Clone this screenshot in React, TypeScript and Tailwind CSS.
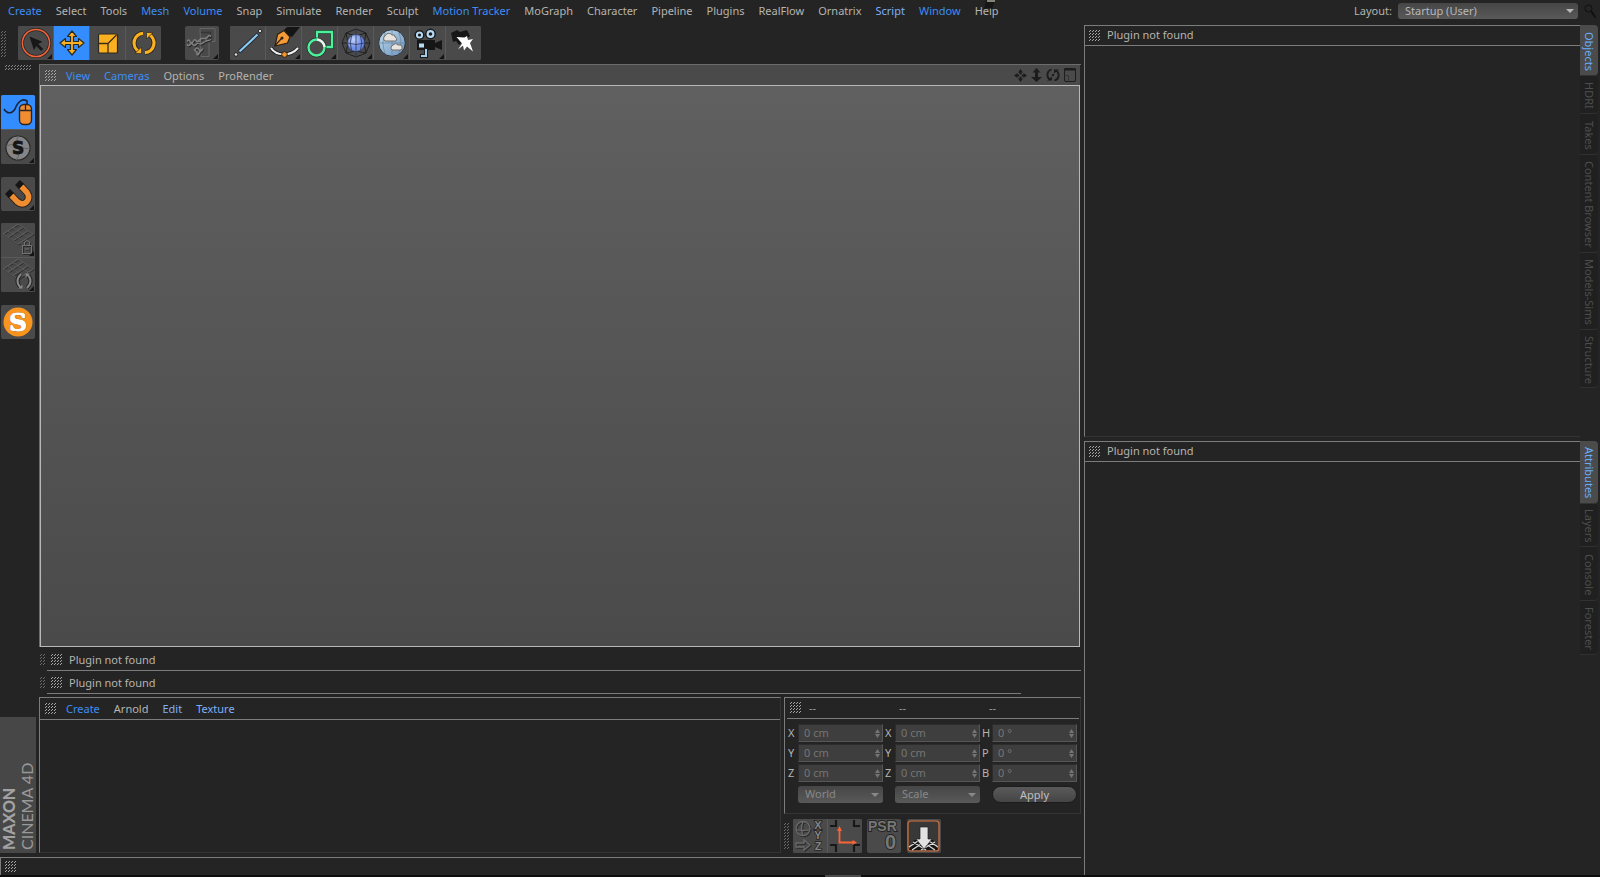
import React, { useId } from "react";

type Tone = "blue" | "light" | "plain";
type Item = { label: string; tone?: Tone };

const toneClass: Record<Tone, string> = {
  blue: "text-[#3c8ef5]",
  light: "text-[#7db0fa]",
  plain: "text-[#b4b4b0]",
};

const mainMenu: Item[] = [
  { label: "Create", tone: "blue" },
  { label: "Select" },
  { label: "Tools" },
  { label: "Mesh", tone: "blue" },
  { label: "Volume", tone: "blue" },
  { label: "Snap" },
  { label: "Simulate" },
  { label: "Render" },
  { label: "Sculpt" },
  { label: "Motion Tracker", tone: "blue" },
  { label: "MoGraph" },
  { label: "Character" },
  { label: "Pipeline" },
  { label: "Plugins" },
  { label: "RealFlow" },
  { label: "Ornatrix" },
  { label: "Script", tone: "light" },
  { label: "Window", tone: "blue" },
  { label: "Help" },
];

function MenuItems({ items }: { items: Item[] }) {
  return (
    <>
      {items.map((i) => (
        <button key={i.label} type="button" className={`whitespace-nowrap ${toneClass[i.tone ?? "plain"]}`}>
          {i.label}
        </button>
      ))}
    </>
  );
}

function Grip({ cols = 4, rows = 4, color = "#a8a8a8" }: { cols?: number; rows?: number; color?: string }) {
  const id = useId();
  return (
    <svg width={cols * 3} height={rows * 3} className="shrink-0" shapeRendering="crispEdges" aria-hidden="true">
      <defs>
        <pattern id={id} width="3" height="3" patternUnits="userSpaceOnUse">
          <path d="M1 0h1v1h-1zM0 1h1v1h-1z" fill={color} />
        </pattern>
      </defs>
      <rect width="100%" height="100%" fill={`url(#${id})`} />
    </svg>
  );
}

function Tool({
  label,
  children,
  active,
  more,
  className = "",
}: {
  label: string;
  children: React.ReactNode;
  active?: boolean;
  more?: boolean;
  className?: string;
}) {
  return (
    <button type="button" aria-label={label} className={`shrink-0 ${active ? "bg-[#348dff]" : "bg-[#4a4a4a]"} ${className}`}>
      <svg viewBox="0 0 34 34" className="mx-auto block size-[34px]" fill="none">
        {children}
        {more && <path d="M33 28v5h-5z" fill="#141414" />}
      </svg>
    </button>
  );
}

/* Disabled icons are pressed into the button: a light edge under a dark one. */
function Emboss({ d, width = 1.2, light = "#777" }: { d: string; width?: number; light?: string }) {
  return (
    <>
      <path d={d} transform="translate(1 1)" stroke="#2a2a2a" strokeWidth={width} />
      <path d={d} stroke={light} strokeWidth={width} />
    </>
  );
}

const CursorIcon = (
  <>
    <circle cx="17" cy="17" r="13.6" stroke="#2c2020" strokeWidth="3" />
    <circle cx="17" cy="17" r="13.6" stroke="#f0653a" strokeWidth="1.5" />
    <path d="M10.500 10.500l13 5.200-4.300 2.300 5 5-2 2-5-5-2.200 4.300z" fill="#171717" />
  </>
);
const MoveIcon = (
  <path
    d="M17 5l4.500 5.500h-3v5h5v-3l5.500 4.500-5.500 4.500v-3h-5v5h3L17 29l-4.500-5.500h3v-5h-5v3L5 17l5.500-4.500v3h5v-5h-3z"
    fill="#fbb01f"
    stroke="#2b2a22"
    strokeWidth="1.200"
    strokeLinejoin="round"
  />
);
const ScaleIcon = (
  <>
    <rect x="7.500" y="8" width="19" height="19" rx="1" fill="#fbb01f" stroke="#2d2920" strokeWidth="1.200" />
    <path d="M7.500 17.500h9.500v9.500M17 17.500l8.500-8.500" stroke="#3a2d14" strokeWidth="1.300" />
  </>
);
const RotateIcon = (
  <>
    <path d="M12.500 25.700A9.700 9.700 0 0 1 16 7.300M21.500 8.300A9.700 9.700 0 0 1 18 26.700" stroke="#2b2820" strokeWidth="5" />
    <path d="M12.500 25.700A9.700 9.700 0 0 1 16 7.300M21.500 8.300A9.700 9.700 0 0 1 18 26.700" stroke="#fbb01f" strokeWidth="3.200" />
    <path d="M8 27.500h6.500v-6.500zM26 6.500h-6.500v6.500z" fill="#fbb01f" stroke="#2b2820" strokeWidth=".7" />
  </>
);
const CoordIcon = (
  <>
    <path d="M15 2.500h15v13h-6v15h-8z" fill="#494949" stroke="#666" />
    <path d="M16 6.500h9.500v9" stroke="#353535" strokeWidth="1.500" />
    <Emboss light="#828282" width={1.300} d="M2 15.500q1.500-3 3 0t3 0 3-1 3 0 3-2 3 0 3-2 3 0M2 18.500q1.500 2 3 0t3 0 3 0 3-1 3 0 3-2 3-1 3-1M10 23.500q2-3 4 0t4-1M11 27.500q2 3 3 0t3-3M9 23.500l5 5" />
    <g fill="#767676">
      <circle cx="15" cy="15" r="1.200" />
      <circle cx="21" cy="12.500" r="1.200" />
      <circle cx="15" cy="24" r="1.200" />
    </g>
  </>
);
const LineIcon = (
  <>
    <path d="M8 26L27 8" stroke="#292929" strokeWidth="4" />
    <path d="M8.500 25.500L26.500 8.500" stroke="#86cbfa" strokeWidth="2.200" />
    <circle cx="5" cy="28.500" r="1.800" fill="#ddd" stroke="#222" />
    <circle cx="29" cy="5" r="1.800" fill="#ddd" stroke="#222" />
  </>
);
const PenIcon = (
  <>
    <path d="M15 6l5-5h13l-8 10z" fill="#151515" />
    <path d="M8 20l2.500-11.500 6.500-4 6 6.500-2.500 6z" fill="#f59a35" stroke="#2c2116" strokeWidth="1.200" />
    <path d="M8 19.500l6.500-7" stroke="#2c2116" strokeWidth="1.200" />
    <circle cx="15" cy="12" r="1.500" fill="#2c2116" />
    <path d="M4 22c5 8 19 9 27 0" stroke="#202020" strokeWidth="4" />
    <path d="M4 22c5 8 19 9 27 0" stroke="#eee" strokeWidth="2" />
    <circle cx="17.500" cy="28.500" r="2.800" fill="#f79420" stroke="#242424" />
  </>
);
const SplineIcon = (
  <>
    <path d="M14 14V6h15v15h-8" stroke="#203a2d" strokeWidth="4" />
    <path d="M14 14V6h15v15h-8" stroke="#4bf29b" strokeWidth="2.300" />
    <circle cx="13.500" cy="21.500" r="8" stroke="#25332c" strokeWidth="4" />
    <circle cx="13.500" cy="21.500" r="8" fill="#4a4a4a" stroke="#4bf29b" strokeWidth="2.300" />
    <path d="M14 13.500a8 8 0 0 1 7.500 7.500" stroke="#f1f1f1" strokeWidth="2.300" />
  </>
);
const SphereIcon = (
  <>
    <defs>
      <radialGradient id="sphere" cx=".35" cy=".3"><stop stopColor="#c0d2ff" /><stop offset="1" stopColor="#6f8de4" /></radialGradient>
    </defs>
    <path d="M17 3l10 4 4 10-4 10-10 4-10-4-4-10 4-10zM7 7l10 3 10-3M7 27l10-2 10 2M7 7l2 10-2 10M27 7l-2 10 2 10M3 17h5M31 17h-5" stroke="#202020" strokeWidth="1" />
    <circle cx="17" cy="17" r="8.500" fill="url(#sphere)" stroke="#33426e" strokeWidth=".8" />
    <path d="M17 3v28M8.500 17q8.500 3 17 0M12.500 10q-2.500 7 0 14M21.500 10q2.500 7 0 14" stroke="#2c3658" strokeWidth=".8" />
  </>
);
const SkyIcon = (
  <>
    <defs>
      <linearGradient id="sky" x2="1" y2="1"><stop stopColor="#c1dcf1" /><stop offset="1" stopColor="#6a92ba" /></linearGradient>
    </defs>
    <circle cx="17" cy="17" r="13.300" fill="url(#sky)" stroke="#2e3338" />
    <path d="M17 4v26M4 17h26M10 7q-4 10 0 20M24 7q4 10 0 20" stroke="#66859f" strokeWidth=".7" />
    <path d="M10 15a3 3 0 0 1 0-5 4 4 0 0 1 7-1q3-1 3 2 3 1 1 4zM17 24a3 3 0 0 1 1-5q3-3 5 0 4-1 4 2 1 3-2 3z" fill="#e7e4e0" stroke="#66635f" strokeWidth=".9" />
  </>
);
const CameraIcon = (
  <>
    <path d="M6 14h18v3l7-3v10l-7-3v3H6z" fill="#161616" />
    <circle cx="8.500" cy="9" r="4.300" fill="#b5daf6" stroke="#1b1b1b" strokeWidth="1.500" />
    <circle cx="19.500" cy="8" r="4.700" fill="#b5daf6" stroke="#1b1b1b" strokeWidth="1.500" />
    <circle cx="8.500" cy="9" r="1.600" fill="#1b1b1b" />
    <circle cx="19.500" cy="8" r="1.800" fill="#1b1b1b" />
    <path d="M15 22v8H9" stroke="#1b1b1b" strokeWidth="4" />
    <path d="M15 23v7h-5" stroke="#a5cce8" strokeWidth="2" />
    <rect x="8" y="17.500" width="5" height="4" fill="#b5daf6" />
  </>
);
const LightIcon = (
  <>
    <path d="M4 7l6-3 3 2 7-2 3 6-11 9-3-4-3 1z" fill="#171717" />
    <path d="M9.500 11l8 0.500 2.500-1.500 1 4 5-1-3 4 3 8.500-6-5-3 4-1-5-5 4 4-6z" fill="#fff" />
  </>
);
const MouseIcon = (
  <>
    <path d="M3 14c3 5 8 5 11 0 3-8 8-11 12-8v4" stroke="#16263d" strokeWidth="1.600" />
    <rect x="18.500" y="9.500" width="12" height="20" rx="4.500" fill="#f08d30" stroke="#2b2420" strokeWidth="1.400" />
    <path d="M18.500 15.500h12M24.500 9.500v6" stroke="#2b2420" strokeWidth="1.300" />
  </>
);
const SnapIcon = (
  <>
    <circle cx="17" cy="18" r="12" fill="#858585" stroke="#282828" strokeWidth="1.200" />
    <path d="M5 16q5-3 12 0t12 3M17 6q-3 6 0 12t-2 12" stroke="#646464" />
    <text x="17" y="24" textAnchor="middle" fontFamily="'DejaVu Sans', sans-serif" fontWeight="700" fontSize="17" fill="#151515" stroke="#151515" strokeWidth=".8">S</text>
  </>
);
const MagnetIcon = (
  <>
    <path d="M9 17l7 7.500q5.500 4.500 9.500.500t.500-9.500l-7-7.500" stroke="#2b2119" strokeWidth="7.500" />
    <path d="M9 17l7 7.500q5.500 4.500 9.500.500t.500-9.500l-7-7.500" stroke="#f08d30" strokeWidth="5.500" />
    <path d="M10.500 18.500l-4-4M20.500 9.500l-4-4" stroke="#151515" strokeWidth="7" />
  </>
);
const floor = "M2 11l15-10 15 10-15 10zM7 8l15 10M12 4.500l15 10M7 14l15-10M12 17.500l15-10";
const GridLockIcon = (
  <>
    <Emboss d={floor} width={0.8} light="#636363" />
    <rect x="20" y="19" width="13" height="13" fill="#4a4a4a" />
    <Emboss d="M21.500 22.500h9v8h-9zM23.500 22v-3q2.500-3 5 0v3M24 26h4" width={1} light="#727272" />
  </>
);
const GridRotateIcon = (
  <>
    <Emboss d={floor} width={0.8} light="#636363" />
    <path d="M20 16q-7 7 0 14M26 16q7 7 0 14" stroke="#262626" strokeWidth="4" />
    <path d="M20 16q-7 7 0 14M26 16q7 7 0 14" stroke="#858585" strokeWidth="2" />
    <path d="M17 30.500h4.500v-4zM29 15.500h-4.500v4z" fill="#858585" />
  </>
);
const OrangeSIcon = (
  <>
    <circle cx="17" cy="17" r="14.500" fill="#f9941e" />
    <text x="17" y="26" textAnchor="middle" fontFamily="'DejaVu Serif', serif" fontWeight="700" fontSize="25" fill="#fff" stroke="#6a3410" strokeWidth="1" paintOrder="stroke">S</text>
    <text x="17" y="26" textAnchor="middle" aria-hidden="true" fontFamily="'DejaVu Serif', serif" fontWeight="700" fontSize="25" fill="#fff" stroke="#fff" strokeWidth=".8">S</text>
  </>
);
const XyzIcon = (
  <>
    <Emboss width={1.300} light="#696969" d="M17 9.500a7 7 0 1 1-14 0a7 7 0 1 1 14 0M3 10.500q7 2 14 0M10 2.500q-3 7 0 14M3 24h8v-3l6 5-6 5v-3H3z" />
    <g fontFamily="'Liberation Sans', sans-serif" fontWeight="700" fontSize="11" fill="#858585" stroke="#222" strokeWidth="1.500" paintOrder="stroke" textAnchor="middle">
      <text>
        <tspan x="25" y="10">X</tspan>
        <tspan x="25" y="20">Y</tspan>
        <tspan x="25" y="31">Z</tspan>
      </text>
    </g>
  </>
);
const AxisIcon = (
  <>
    <path d="M2 7h6V1M26 1v6h6M2 26h6v7M32 26h-6v7" stroke="#181818" strokeWidth="2.200" />
    <path d="M11.500 10v13.500H26" stroke="#fa6435" strokeWidth="1.800" />
    <path d="M11.500 7l2.500 5H9zM29 23.500l-4.500 2.500v-5z" fill="#fa6435" />
  </>
);
const PsrIcon = (
  <g fontFamily="'Liberation Sans', sans-serif" fontWeight="700" stroke="#242424" strokeWidth="1.800" paintOrder="stroke">
    <text x="1" y="12" fontSize="14" fill="#777">PSR</text>
    <text x="18" y="30" fontSize="20" fill="#777">0</text>
  </g>
);
const DropIcon = (
  <>
    <rect x="1" y="2" width="31" height="30" rx="3" fill="#383838" stroke="#d9723c" strokeWidth="1.200" />
    <path d="M7 21h19l5 10H2z" fill="#161616" />
    <path d="M2 28l9-6M5 31l12-8M14 31l14-8M31 28l-9-6M28 31l-12-8M19 31L6 23" stroke="#ddd" strokeWidth="1.200" />
    <path d="M13 8h8v12h4l-8 10-8-10h4z" fill="#e2e2e2" stroke="#222" strokeWidth=".7" />
  </>
);

function PluginHeader() {
  return (
    <div className="flex h-5 items-center gap-[6px] border-b border-[#7c7c7c] pl-1">
      <Grip />
      <span className="pb-px">Plugin not found</span>
    </div>
  );
}

function Tabs({ tabs }: { tabs: { label: string; size: string }[] }) {
  return (
    <div role="tablist" className="w-[18px] shrink-0">
      {tabs.map((t, i) => (
        <button
          key={t.label}
          type="button"
          role="tab"
          aria-selected={i === 0}
          className={`flex w-full items-center justify-center rounded-r-sm border-b pt-[2px] [writing-mode:vertical-rl] ${t.size} ${
            i === 0 ? "border-[#333] bg-[#4b4b4b] text-[#69adff]" : "border-[#303030] bg-[#202020] text-[#4e4e4e]"
          }`}
        >
          {t.label}
        </button>
      ))}
    </div>
  );
}

function Field({ label, value, group }: { label: string; value: string; group: string }) {
  const id = `${group}-${label}`;
  return (
    <div className="flex items-center">
      <label htmlFor={id} className="w-[10px] shrink-0">
        {label}
      </label>
      <div className="flex h-[18px] min-w-0 flex-1 items-center border border-t-[#2c2c2c] border-r-[#565656] border-b-[#565656] border-l-[#2c2c2c] bg-[#3e3e3e] pr-0.5 pl-[5px]">
        <input id={id} defaultValue={value} disabled className="w-full min-w-0 bg-transparent text-[#757575] outline-none" />
        <svg width="5" height="9" className="shrink-0" aria-hidden="true">
          <path d="M2.500 0L5 4H0zM2.500 9L5 5H0z" fill="#747474" />
        </svg>
      </div>
    </div>
  );
}

function Dropdown({ value, id, label, className, textClass }: { value: string; id: string; label: string; className: string; textClass: string }) {
  return (
    <div className={`relative rounded-[3px] bg-linear-to-b from-[#464646] to-[#595959] ${className}`}>
      <select id={id} aria-label={label} className={`block h-full w-full appearance-none pr-4 pb-px pl-[7px] outline-none ${textClass}`}>
        <option>{value}</option>
      </select>
      <svg width="8" height="5" className="pointer-events-none absolute top-1/2 right-1 -mt-0.5" aria-hidden="true">
        <path d="M0 0h8L4 4z" fill="currentColor" />
      </svg>
    </div>
  );
}

const coordGroups = [
  { name: "position", rows: [["X", "0 cm"], ["Y", "0 cm"], ["Z", "0 cm"]] },
  { name: "size", rows: [["X", "0 cm"], ["Y", "0 cm"], ["Z", "0 cm"]] },
  { name: "rotation", rows: [["H", "0 °"], ["P", "0 °"], ["B", "0 °"]] },
];

function Coordinates() {
  return (
    <section className="flex h-[117px] flex-col border border-[#343434] border-t-[#7c7c7c] border-l-[#7c7c7c] pr-px pl-0.5">
      <div className="flex h-[21px] shrink-0 items-center border-b border-[#7c7c7c] pl-[3px] text-[#999]">
        <Grip />
        <div className="grid flex-1 grid-cols-3 pl-[7px]">
          <span>--</span>
          <span>--</span>
          <span>--</span>
        </div>
      </div>
      <div className="grid grid-cols-3 gap-x-[2px] pt-[5px] pr-0.5 pl-px">
        {coordGroups.map((g) => (
          <div key={g.name} className="flex flex-col gap-0.5">
            {g.rows.map(([l, v]) => (
              <Field key={l} label={l} value={v} group={g.name} />
            ))}
            <div className="mt-0.5 pl-[10px]">
              {g.name === "position" && <Dropdown id="space" label="Coordinate space" value="World" className="h-[17px] text-[#888]" textClass="text-[#888]" />}
              {g.name === "size" && <Dropdown id="mode" label="Size mode" value="Scale" className="h-[17px] text-[#888]" textClass="text-[#888]" />}
              {g.name === "rotation" && (
                <button type="button" className="block h-[17px] w-full rounded-full border border-[#1c1c1c] bg-linear-to-b from-[#5a5a5a] to-[#454545] text-[#c0c0c0]">
                  Apply
                </button>
              )}
            </div>
          </div>
        ))}
      </div>
    </section>
  );
}

export default function App() {
  return (
    <div className="flex h-screen min-h-[640px] flex-col overflow-hidden bg-[#242424] font-['Noto_Sans',sans-serif] text-[11px] leading-4 text-[#b4b4b0]">
      <header className="relative flex h-[25px] shrink-0 items-center justify-between pr-1 pb-1 pl-2">
        <nav className="flex gap-[14px]">
          <MenuItems items={mainMenu} />
        </nav>
        <svg width="14" height="12" className="absolute top-0 left-[983px]" aria-hidden="true">
          <path d="M3 0h9L9 9l-4-1-4 1z" fill="#161616" />
          <path d="M4 1h8" stroke="#aaa89c" strokeWidth="1.500" />
        </svg>
        <div className="flex items-center gap-[6px]">
          <label htmlFor="layout">Layout:</label>
          <Dropdown id="layout" label="Layout" value="Startup (User)" className="h-4 w-[180px] text-[#b8b8b8]" textClass="text-[#b8b8b8]" />
          <button type="button" aria-label="Search">
            <svg width="12" height="14" fill="none" stroke="#111">
              <circle cx="4.500" cy="4.500" r="3.500" />
              <path d="M7 7l5 7" strokeWidth="2" />
            </svg>
          </button>
        </div>
      </header>

      <div className="flex min-h-0 flex-1">
        <div className="flex min-w-0 flex-1 flex-col pr-[3px]">
          <div className="flex h-[39px] shrink-0 items-start pt-px">
            <div className="mt-[5px] w-[18px] pl-px">
              <Grip cols={2} rows={9} color="#6c6c6c" />
            </div>
            <div className="flex gap-px overflow-hidden rounded-xs bg-[#5a5a5a]">
              <Tool label="Live selection" more className="w-[35px]">{CursorIcon}</Tool>
              <Tool label="Move" active className="w-[35px]">{MoveIcon}</Tool>
              <Tool label="Scale" className="w-[35px]">{ScaleIcon}</Tool>
              <Tool label="Rotate" className="w-[35px]">{RotateIcon}</Tool>
            </div>
            <div className="ml-6 overflow-hidden rounded-xs">
              <Tool label="Coordinate system" more className="block">{CoordIcon}</Tool>
            </div>
            <div className="ml-[11px] flex gap-px overflow-hidden rounded-xs bg-[#5a5a5a]">
              <Tool label="Line" className="w-[35px]">{LineIcon}</Tool>
              <Tool label="Pen" more className="w-[35px]">{PenIcon}</Tool>
              <Tool label="Spline" more className="w-[35px]">{SplineIcon}</Tool>
              <Tool label="Generator" more className="w-[35px]">{SphereIcon}</Tool>
              <Tool label="Sky" more className="w-[35px]">{SkyIcon}</Tool>
              <Tool label="Camera" more className="w-[35px]">{CameraIcon}</Tool>
              <Tool label="Light" className="w-[35px]">{LightIcon}</Tool>
            </div>
          </div>

          <div className="flex min-h-0 flex-1">
            <aside className="flex w-[39px] shrink-0 flex-col items-start">
              <div className="flex h-[31px] shrink-0 items-start pt-px pl-[5px]">
                <Grip cols={9} rows={2} color="#8a8a8a" />
              </div>
              <div className="ml-px flex flex-col gap-px overflow-hidden rounded-xs bg-[#5a5a5a]">
                <Tool label="Tweak mode" active>{MouseIcon}</Tool>
                <Tool label="Viewport solo" more>{SnapIcon}</Tool>
              </div>
              <div className="mt-[13px] ml-px flex overflow-hidden rounded-xs">
                <Tool label="Enable snap" more>{MagnetIcon}</Tool>
              </div>
              <div className="mt-[12px] ml-px flex flex-col gap-px overflow-hidden rounded-xs bg-[#5a5a5a]">
                <Tool label="Lock workplane" more>{GridLockIcon}</Tool>
                <Tool label="Rotate workplane" more>{GridRotateIcon}</Tool>
              </div>
              <div className="mt-[13px] ml-px flex overflow-hidden rounded-xs">
                <Tool label="Sculpt layers">{OrangeSIcon}</Tool>
              </div>
              <div className="mt-auto mb-1 flex h-[136px] w-9 rotate-180 flex-col items-start justify-start bg-[#474747] pt-[3px] font-['Lato',sans-serif] text-base leading-[18px] text-[#999] [writing-mode:vertical-rl]">
                <span className="font-black text-[#a2a2a2]">MAXON</span>
                <span>CINEMA 4D</span>
              </div>
            </aside>

            <div className="flex min-w-0 flex-1 flex-col">
              <section className="flex min-h-0 flex-1 flex-col border-t border-l border-[#6c6c6c] pr-px">
                <div className="flex h-5 shrink-0 items-center justify-between bg-[#4a4a4a] pr-[3px] pl-[5px]">
                  <div className="flex items-center gap-[14px] pt-px">
                    <div className="flex items-center gap-[9px]">
                      <Grip />
                      <button type="button" className="text-[#3c8ef5]">View</button>
                    </div>
                    <MenuItems items={[{ label: "Cameras", tone: "blue" }, { label: "Options" }, { label: "ProRender" }]} />
                  </div>
                  <div className="flex items-center gap-[3px]">
                    <button type="button" aria-label="Pan view">
                      <svg width="13" height="13" fill="#1c1c1c"><path d="M6.500 0L9 3.500H7.500v2h-2v-2H4zM6.500 13L9 9.500H7.500v-2h-2v2H4zM0 6.500L3.500 4v1.500h1.500v2H3.500V9zM13 6.500L9.500 4v1.500H8v2h1.500V9z" /></svg>
                    </button>
                    <button type="button" aria-label="Zoom view">
                      <svg width="13" height="14" fill="#1c1c1c"><path d="M6.500 0l4 4.500H8V9h4l-5.500 5L1 9h4V4.500H2.500z" /></svg>
                    </button>
                    <button type="button" aria-label="Orbit view">
                      <svg width="14" height="14" fill="none" stroke="#1c1c1c" strokeWidth="1.800"><path d="M4 11.500A5.500 5.500 0 0 1 5.500 1.500M10 2.500A5.500 5.500 0 0 1 8.500 12.500" /><path d="M1 12.500h5V8.500zM13 1.500H8v4z" fill="#1c1c1c" stroke="none" /><circle cx="7" cy="7" r="1.200" fill="#1c1c1c" stroke="none" /></svg>
                    </button>
                    <button type="button" aria-label="Toggle view">
                      <svg width="14" height="14" fill="none" stroke="#1c1c1c"><rect x="1.500" y=".5" width="11" height="13" rx="1.500" /><path d="M1 1.500h12" strokeWidth="2" /><path d="M1.500 7.500h4v6" stroke="#333" /></svg>
                    </button>
                  </div>
                </div>
                <div className="min-h-0 flex-1 border border-[#b8b8b8] bg-linear-to-b from-[#606060] to-[#4a4a4a]" />
              </section>

              <div className="flex shrink-0 flex-col pt-px">
                {["mr-0", "mr-[60px]"].map((m) => (
                  <div key={m} className="flex h-[23px] items-center gap-px pl-px">
                    <Grip cols={2} color="#6c6c6c" />
                    <div className={`flex h-full flex-1 items-center gap-[6px] border-b border-[#7c7c7c] pt-px pl-1 ${m}`}>
                      <Grip />
                      <span>Plugin not found</span>
                    </div>
                  </div>
                ))}
              </div>

              <div className="mt-[3px] flex shrink-0 gap-[3px] pb-1">
                <section className="flex min-w-0 flex-1 flex-col border border-[#343434] border-t-[#7c7c7c] border-l-[#7c7c7c]">
                  <div className="flex h-[22px] items-center gap-[14px] border-b border-[#7c7c7c] pl-[5px]">
                    <div className="flex items-center gap-[9px]">
                      <Grip />
                      <button type="button" className="text-[#3c8ef5]">Create</button>
                    </div>
                    <MenuItems items={[{ label: "Arnold" }, { label: "Edit", tone: "light" }, { label: "Texture", tone: "light" }]} />
                  </div>
                </section>
                <div className="w-[297px] shrink-0">
                  <Coordinates />
                  <div className="flex pt-[5px]">
                    <div className="mt-1 w-[9px]">
                      <Grip cols={2} rows={9} color="#6c6c6c" />
                    </div>
                    <div className="flex gap-px overflow-hidden rounded-xs bg-[#5a5a5a]">
                      <Tool label="Reset axes">{XyzIcon}</Tool>
                      <Tool label="Axis center">{AxisIcon}</Tool>
                    </div>
                    <div className="ml-[5px] flex overflow-hidden rounded-xs">
                      <Tool label="Reset PSR">{PsrIcon}</Tool>
                    </div>
                    <div className="ml-[6px] flex overflow-hidden rounded-xs">
                      <Tool label="Drop to floor">{DropIcon}</Tool>
                    </div>
                  </div>
                </div>
              </div>
            </div>
          </div>

          <footer className="flex h-[18px] shrink-0 items-center border-t border-l border-[#7c7c7c] pl-1">
            <Grip />
          </footer>
        </div>

        <div className="flex w-[516px] shrink-0 flex-col">
          <div className="flex h-[412px] shrink-0">
            <section className="flex-1 border-t border-b border-l border-[#7c7c7c] border-b-[#343434]">
              <PluginHeader />
            </section>
            <Tabs
              tabs={[
                { label: "Objects", size: "h-[51px]" },
                { label: "HDRI", size: "h-[38px]" },
                { label: "Takes", size: "h-[41px]" },
                { label: "Content Browser", size: "h-[98px]" },
                { label: "Models-Sims", size: "h-[77px]" },
                { label: "Structure", size: "h-[58px]" },
              ]}
            />
            <div className="w-[2px]" />
          </div>
          <div className="mt-1 flex min-h-0 flex-1">
            <section className="flex-1 border-t border-l border-[#7c7c7c]">
              <PluginHeader />
            </section>
            <Tabs
              tabs={[
                { label: "Attributes", size: "h-[63px]" },
                { label: "Layers", size: "h-[43px]" },
                { label: "Console", size: "h-[54px]" },
                { label: "Forester", size: "h-[54px]" },
              ]}
            />
            <div className="w-[2px]" />
          </div>
        </div>
      </div>
      <div className="flex h-0.5 shrink-0 justify-center bg-[#0d0d0d] pl-[86px]">
        <div className="w-9 bg-[#4b4b4b]" />
      </div>
    </div>
  );
}
